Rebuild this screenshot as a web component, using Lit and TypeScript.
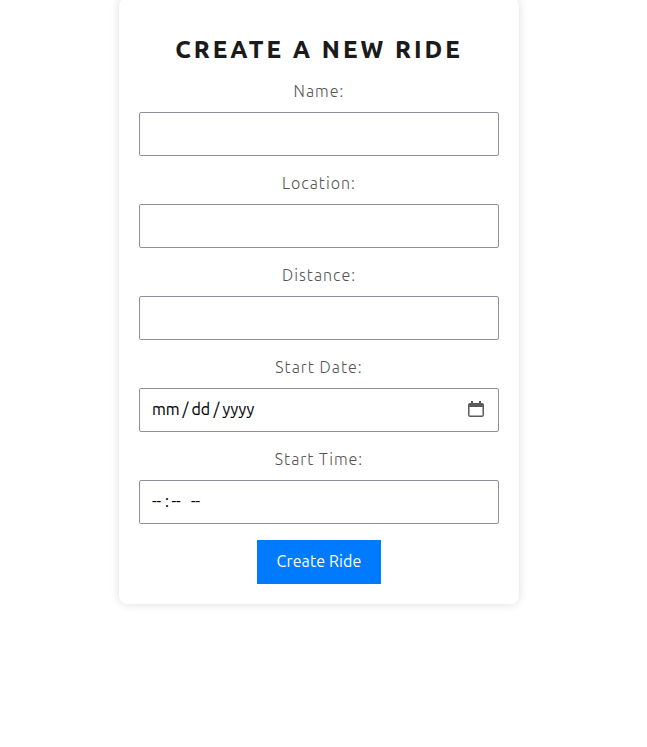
import { LitElement, html, css, svg } from "lit";
import { customElement } from "lit/decorators.js";

const calendarIcon = html`<svg class="calendar" width="16" height="16" viewBox="0 0 16 16" aria-hidden="true">
  ${svg`<path fill="#5b5b5b" fill-rule="evenodd" d="M3 0h2v2h6V0h2v2h1a2 2 0 0 1 2 2v10a2 2 0 0 1-2 2H2a2 2 0 0 1-2-2V4a2 2 0 0 1 2-2h1zM1.500 6v7.900a.6.6 0 0 0 .6.6h11.800a.6.6 0 0 0 .6-.6V6z"/>`}
</svg>`;

@customElement("app-root")
export class AppRoot extends LitElement {
  static styles = css`
    :host {
      display: block;
      height: 747px;
      overflow: hidden;
      background: #fff;
      font-family: Ubuntu, "Open Sans", "Noto Sans", sans-serif;
      font-size: 16px;
    }
    .card {
      box-sizing: border-box;
      width: 400px;
      height: 606px;
      margin: -2px 0 0 119px;
      padding: 36px 20px 20px;
      border-radius: 8px;
      background: #fff;
      box-shadow: 0 0 10px rgba(0, 0, 0, 0.14);
      display: flex;
      flex-direction: column;
      align-items: center;
    }
    h1 {
      margin: 0 0 12px;
      height: 32px;
      line-height: 32px;
      font-size: 24px;
      font-weight: 800;
      letter-spacing: 3px;
      color: #1b1b1b;
      white-space: nowrap;
    }
    .field {
      width: 100%;
      height: 92px;
    }
    .field:last-of-type {
      height: 94px;
    }
    .label {
      display: block;
      height: 34px;
      line-height: 27px;
      text-align: center;
      font-weight: 300;
      font-size: 16px;
      letter-spacing: 1px;
      color: #555;
    }
    .input {
      box-sizing: border-box;
      height: 44px;
      padding: 0 14px 0 12px;
      border: 1px solid #8f8f9d;
      border-radius: 2px;
      display: flex;
      align-items: center;
      color: #000;
      font-weight: 450;
      -webkit-text-stroke: 0.1px #000;
      line-height: 41px;
      white-space: pre;
    }
    .part {
      flex: none;
      height: 43px;
    }
    .mm { width: 30.500px; }
    .slash { width: 9px; }
    .dd { width: 22px; }
    .hh { width: 13px; }
    .colon { width: 6.500px; }
    .min { width: 19.500px; }
    .calendar {
      margin-left: auto;
      margin-top: -3px;
    }
    button {
      width: 124px;
      height: 44px;
      flex: none;
      padding: 0 0 1px;
      border: 0;
      background: #007bff;
      color: #fff;
      font: inherit;
      letter-spacing: 0.1px;
      line-height: 43px;
    }
  `;

  private field(label: string, content: unknown = "") {
    return html`<div class="field"><span class="label">${label}</span><div class="input">${content}</div></div>`;
  }

  render() {
    return html`<main class="card">
      <h1>CREATE A NEW RIDE</h1>
      ${this.field("Name:")}
      ${this.field("Location:")}
      ${this.field("Distance:")}
      ${this.field("Start Date:", html`<span class="part mm">mm</span><span class="part slash">/</span><span class="part dd">dd</span><span class="part slash">/</span><span class="part yyyy">yyyy</span>${calendarIcon}`)}
      ${this.field("Start Time:", html`<span class="part hh">--</span><span class="part colon">:</span><span class="part min">--</span><span class="part">--</span>`)}
      <button>Create Ride</button>
    </main>`;
  }
}
